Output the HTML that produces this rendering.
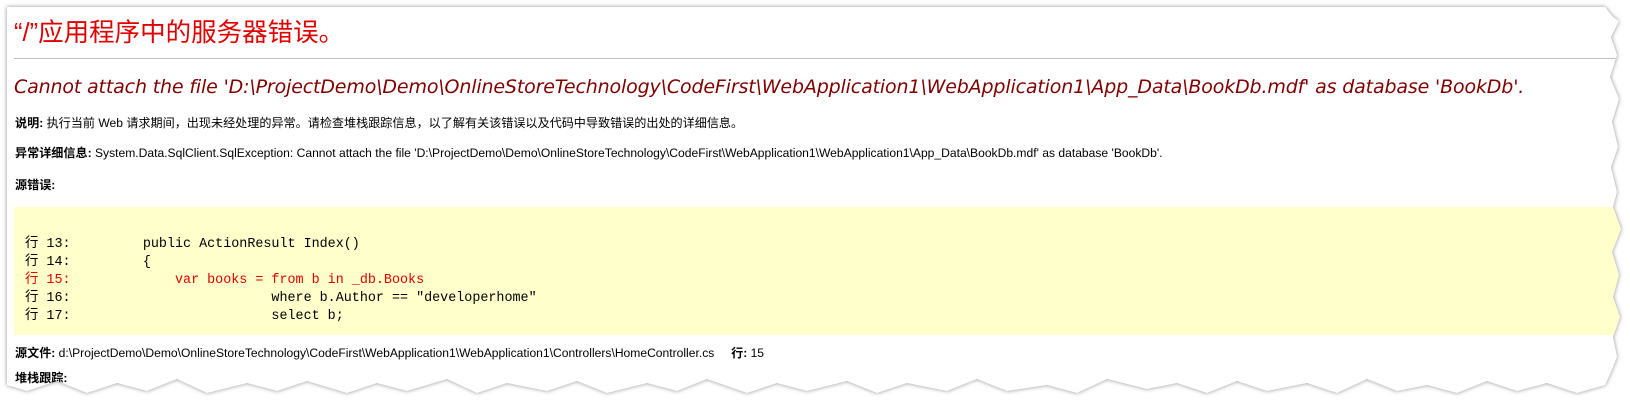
<!DOCTYPE html>
<html><head><meta charset="utf-8"><style>
html,body{margin:0;padding:0;background:#fff;width:1630px;height:410px;overflow:hidden}
.wrap{position:absolute;left:7px;top:7px;width:1615px;height:400px;filter:drop-shadow(0 0 2px rgba(0,0,0,.45))}
.pg{position:absolute;inset:0;background:#fff;overflow:hidden;font-family:"Liberation Sans","Noto Sans CJK SC",sans-serif;
clip-path:polygon(0 0,1598px 0,1606px 10px,1612px 14px,1604px 30px,1610px 48px,1603px 70px,1612px 92px,1605px 115px,1611px 140px,1604px 160px,1610px 185px,1606px 200px,1614px 222px,1605px 245px,1612px 268px,1606px 290px,1613px 310px,1606px 330px,1610px 350px,1604px 365px,1598px 378px,1570px 386px,1540px 376px,1510px 384px,1480px 374px,1450px 386px,1420px 378px,1390px 384px,1360px 372px,1330px 386px,1300px 376px,1260px 384px,1230px 374px,1200px 386px,1170px 376px,1140px 382px,1100px 372px,1070px 386px,1040px 378px,1000px 384px,970px 372px,940px 384px,900px 376px,870px 386px,840px 374px,800px 384px,770px 376px,740px 386px,700px 372px,670px 384px,640px 376px,600px 386px,570px 374px,540px 384px,500px 376px,470px 386px,440px 372px,400px 384px,370px 376px,340px 386px,300px 374px,270px 384px,240px 376px,200px 386px,170px 372px,140px 384px,110px 376px,80px 386px,50px 374px,20px 384px,0 378px)}
h1{position:absolute;left:7px;top:11px;margin:0;font-size:25.5px;line-height:30px;font-weight:normal;color:#e10000}
.hr{position:absolute;left:7px;right:0;top:51px;border-top:1px solid #c0c0c0}
h2{position:absolute;left:7px;top:68px;margin:0;font-size:19px;line-height:24px;font-weight:normal;font-style:italic;color:#800000;font-family:"DejaVu Sans","Liberation Sans",sans-serif;letter-spacing:-0.15px;white-space:nowrap}
.t{position:absolute;left:8px;font-size:12.1px;line-height:14px;color:#000;white-space:nowrap}
.t b{font-weight:bold}
.code{position:absolute;left:7px;right:0;top:200px;height:128px;background:#ffffcc}
pre{position:absolute;left:11px;top:29px;margin:0;font-family:"Liberation Mono","Noto Sans CJK SC",monospace;font-size:13.4px;line-height:18px;color:#000}
.r{color:#e00000}
</style></head><body>
<div class="wrap"><div class="pg">
<h1>“/”应用程序中的服务器错误。</h1>
<div class="hr"></div>
<h2>Cannot attach the file 'D:\ProjectDemo\Demo\OnlineStoreTechnology\CodeFirst\WebApplication1\WebApplication1\App_Data\BookDb.mdf' as database 'BookDb'.</h2>
<div class="t" style="top:109px"><b>说明:</b> 执行当前 Web 请求期间，出现未经处理的异常。请检查堆栈跟踪信息，以了解有关该错误以及代码中导致错误的出处的详细信息。</div>
<div class="t" style="top:139px"><b>异常详细信息:</b> System.Data.SqlClient.SqlException: Cannot attach the file 'D:\ProjectDemo\Demo\OnlineStoreTechnology\CodeFirst\WebApplication1\WebApplication1\App_Data\BookDb.mdf' as database 'BookDb'.</div>
<div class="t" style="top:171px"><b>源错误:</b></div>
<div class="code"><pre>行 13:         public ActionResult Index()
行 14:         {
<span class="r">行 15:             var books = from b in _db.Books</span>
行 16:                         where b.Author == "developerhome"
行 17:                         select b;</pre></div>
<div class="t" style="top:339px"><b>源文件:</b> d:\ProjectDemo\Demo\OnlineStoreTechnology\CodeFirst\WebApplication1\WebApplication1\Controllers\HomeController.cs &nbsp;&nbsp;&nbsp;&nbsp;<b>行:</b> 15</div>
<div class="t" style="top:364px"><b>堆栈跟踪:</b></div>
</div></div>
</body></html>
